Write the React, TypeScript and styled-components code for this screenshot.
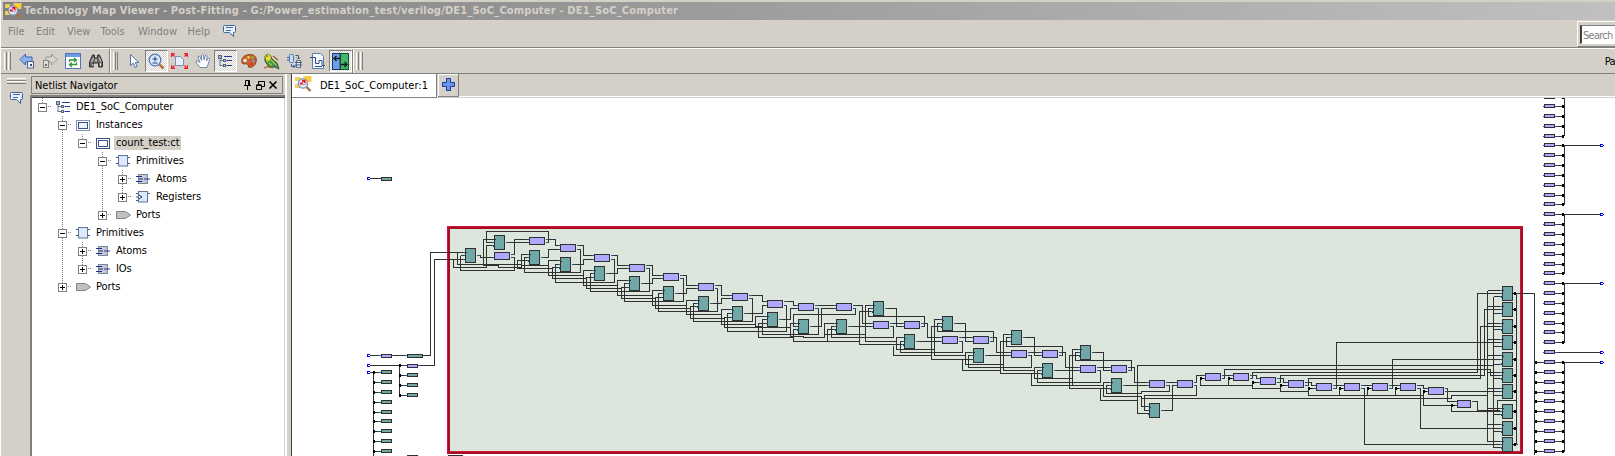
import React from "react";
import styled, { createGlobalStyle } from "styled-components";

const face = "#d4d0c8";
const ui = `"DejaVu Sans Condensed", "Noto Sans", sans-serif`;

const Global = createGlobalStyle`
  * { box-sizing: border-box; }
  html, body { margin: 0; padding: 0; overflow: hidden; background: ${face}; }
  svg { display: block; flex: none; }
`;

const Window = styled.div`
  width: 1615px;
  height: 456px;
  display: flex;
  flex-direction: column;
  overflow: hidden;
  background: ${face};
  border-left: 1px solid #fff;
  font-family: ${ui};
  font-size: 11px;
  color: #000;
  white-space: nowrap;
`;
const TitleBar = styled.header`
  flex: none;
  height: 18px;
  margin: 2px 0 0 2px;
  padding-left: 2px;
  display: flex;
  align-items: center;
  gap: 2px;
  background: linear-gradient(90deg, #808080, #c0c0c0);
`;
const Title = styled.h1`
  margin: 0;
  font-size: 11px;
  line-height: 18px;
  font-weight: bold;
  color: ${face};
  letter-spacing: 0.19px;
`;
const MenuBar = styled.nav`
  flex: none;
  height: 28px;
  display: flex;
  border-bottom: 1px solid #808080;
`;
const MenuItem = styled.span<{ $w: number }>`
  width: ${(p) => p.$w}px;
  line-height: 23px;
  color: #808080;
`;
const Menus = styled.div`
  flex: 1;
  display: flex;
  padding-left: 7px;
`;
const MenuIcon = styled.span`
  padding-top: 4px;
`;
const SearchFrame = styled.div`
  width: 38px;
  height: 26px;
  margin-top: 1px;
  padding: 3px 0 2px 2px;
  border: 1px solid #fff;
  border-right: 0;
  border-bottom-color: #808080;
`;
const SearchBox = styled.div`
  height: 19px;
  border: 1px solid #808080;
  border-left: 2px solid #404040;
  border-right: 0;
  border-bottom-color: #fff;
  background: #fff;
  color: #808080;
  line-height: 19px;
  padding-left: 1px;
  letter-spacing: -0.75px;
`;
const ToolBar = styled.div`
  flex: none;
  height: 26px;
  display: flex;
  border-top: 1px solid #fff;
  border-bottom: 1px solid #808080;
`;
const ToolGroup = styled.div<{ $w?: number }>`
  ${(p) => (p.$w ? `width: ${p.$w}px;` : "flex: 1;")}
  height: 24px;
  display: flex;
  align-items: center;
  padding-left: 3px;
  & + & { border-left: 1px solid #808080; box-shadow: inset 1px 0 #fff; }
`;
const Grip = styled.i`
  width: 7px;
  height: 18px;
  margin-right: 4px;
  border: solid #808080;
  border-width: 0 1px 0 0;
  background: linear-gradient(90deg, #fff 0 1px, ${face} 1px 2px, #808080 2px 3px, ${face} 3px 4px, #fff 4px 5px, ${face} 5px 7px);
`;
const Tool = styled.span<{ $on?: boolean }>`
  flex: none;
  width: 23px;
  height: 22px;
  display: flex;
  align-items: center;
  justify-content: center;
  ${(p) =>
    p.$on &&
    `border: 1px solid; border-color: #808080 #fff #fff #808080;
     background: repeating-conic-gradient(#fff 0 25%, ${face} 0 50%) 0 0 / 2px 2px;`}
`;
const PageLabel = styled.span`
  margin-left: auto;
  letter-spacing: -0.6px;
`;
const Body = styled.div`
  flex: 1;
  min-height: 0;
  display: flex;
`;
const SideStrip = styled.aside`
  width: 29px;
  padding: 4px 4px 0 6px;
`;
const SideGrip = styled.i`
  display: block;
  height: 6px;
  margin-bottom: 7px;
  border: solid #808080;
  border-width: 0 0 1px;
  background: linear-gradient(#fff 0 1px, ${face} 1px 2px, #808080 2px 3px, #fff 3px 4px, ${face} 4px);
`;
const SideIcon = styled.span`
  display: block;
  margin-left: 2px;
`;
const Dock = styled.section`
  width: 257px;
  display: flex;
  flex-direction: column;
  padding-top: 2px;
  border-right: 2px solid #fff;
`;
const DockHeader = styled.div`
  height: 18px;
  margin: 0 2px 0 1px;
  border: 1px solid #808080;
  padding: 1px 4px 0 3px;
  display: flex;
  align-items: center;
  justify-content: space-between;
  letter-spacing: -0.05px;
`;
const Tree = styled.div`
  flex: 1;
  margin-top: 1px;
  padding: 1px 0 0 6px;
  border: solid #808080;
  border-width: 2px 0 0 2px;
  box-shadow: inset 0 1px #404040, inset -1px 0 ${face};
  background: #fff;
`;
const Row = styled.div`
  height: 18px;
  display: flex;
  align-items: center;
`;
const Guide = styled.span<{ $line?: boolean }>`
  width: 20px;
  height: 18px;
  background: ${(p) =>
    p.$line ? "repeating-linear-gradient(#808080 0 1px, transparent 1px 2px) 4px 0 / 1px 100% no-repeat" : "none"};
`;
const Toggle = styled.span<{ $next: boolean }>`
  width: 18px;
  height: 18px;
  display: flex;
  align-items: center;
  background:
    repeating-linear-gradient(90deg, #808080 0 1px, transparent 1px 2px) 10px 8px / 4px 1px no-repeat,
    repeating-linear-gradient(#808080 0 1px, transparent 1px 2px) 4px 0 / 1px ${(p) => (p.$next ? 18 : 5)}px no-repeat;
`;
const IconSlot = styled.span`
  width: 14px;
`;
const Label = styled.span<{ $sel?: boolean }>`
  height: 14px;
  line-height: 14px;
  margin-left: 4px;
  padding: 0 2px;
  letter-spacing: -0.08px;
  background: ${(p) => (p.$sel ? face : "none")};
`;
const Main = styled.main`
  flex: 1;
  min-width: 0;
  margin-left: 4px;
  border-left: 1px solid #404040;
  display: flex;
  flex-direction: column;
`;
const Tabs = styled.div`
  flex: none;
  height: 24px;
  display: flex;
  box-shadow: inset 0 -1px ${face}, inset 0 -2px #fff;
`;
const Tab = styled.div`
  width: 145px;
  display: flex;
  align-items: center;
  gap: 8px;
  padding: 0 0 0 3px;
  background: #fff;
  border: solid #808080;
  border-width: 0 1px 1px 0;
  & svg { margin-bottom: 3px; }
`;
const NewTab = styled.div`
  width: 21px;
  height: 23px;
  margin-left: 1px;
  display: flex;
  justify-content: center;
  padding-top: 4px;
  border: solid #808080;
  border-width: 0 1px 1px 0;
  box-shadow: inset 1px 1px #fff;
`;
const Canvas = styled.div`
  flex: 1;
  min-height: 0;
  background: #fff;
  overflow: hidden;
`;

/* ---------- icons ---------- */
const Ic = ({ w = 16, h = 16, children }: { w?: number; h?: number; children: React.ReactNode }) => (
  <svg width={w} height={h} viewBox={`0 0 ${w} ${h}`} fill="none">{children}</svg>
);
const AppIcon = () => (
  <Ic w={17} h={16}>
    <path d="M3 3h8M3 8h4" stroke="#8c98b0" />
    <rect x="0.5" y="1.5" width="4" height="3" fill="#ffd83a" stroke="#e8c870" />
    <rect x="0.5" y="8.5" width="4" height="3" fill="#ffd83a" stroke="#e8c870" />
    <rect x="9" y="0.5" width="7" height="5" fill="#ffcf20" stroke="#f0c860" />
    <path d="M11.500 11l4 4" stroke="#a8703c" strokeWidth="2.400" />
    <circle cx="8" cy="7.500" r="4.600" fill="#dcebf8" stroke="#8294b0" strokeWidth="1.400" />
    <path d="M5 8.500V6.500h2V4h3.500v4.500z" fill="#e0102c" />
    <path d="M8 5.500v2h2" stroke="#fff" />
  </Ic>
);
const Chat = () => (
  <Ic w={15} h={14}>
    <path d="M2.5 1.5h10q1 0 1 1v5q0 1-1 1h-1v4l-4-4H2.500q-1 0-1-1v-5q0-1 1-1z" fill="#e8f0fc" stroke="#3c64a0" />
    <path d="M4 3.500h7M4 6.500h5" stroke="#4a6a9c" />
  </Ic>
);
const Back = () => (
  <Ic>
    <path d="M1 6.500L6.500 1v3H13v5H6.500v3z" fill="#8cb4ec" stroke="#3c64b0" />
    <rect x="8.500" y="8.500" width="6" height="6.500" fill="#eef2fa" stroke="#4c6488" />
    <path d="M11 11h2v2h-2z" fill="#304870" />
  </Ic>
);
const Forward = () => (
  <Ic>
    <path d="M15 6.500L9.500 1v3H4v5h5.500v3z" fill="#d8d6d0" stroke="#989690" />
    <rect x="1.500" y="7.500" width="5" height="7" fill="#dedcd8" stroke="#888680" />
    <path d="M3 11h2v2h-2z" fill="#706e68" />
  </Ic>
);
const Refresh = () => (
  <Ic>
    <rect x="0.500" y="0.500" width="15" height="15" fill="#fff" stroke="#5078b8" />
    <path d="M1 1h14v3H1z" fill="#6c9ce0" />
    <path d="M4.500 9V7H11M9 5l2.500 2L9 9M11.500 9.500v2H5M7 9.500l-2.500 2L7 14" stroke="#2c9444" strokeWidth="1.300" />
  </Ic>
);
const Binoculars = () => (
  <Ic>
    <path d="M4.500 2h2v3h3V2h2l3 7v5h-4v-4h-5v4h-4V9z" fill="#686868" stroke="#303030" />
    <path d="M3.500 9l2-4M5 11v2M11 4.500l2 4M12.500 10v3" stroke="#e0e0e0" />
    <path d="M7 6h2v3H7z" fill="#a8a8a8" />
  </Ic>
);
const Pointer = () => (
  <Ic>
    <path d="M4.500 1.500v11l2.800-2.300 1.900 4.300 2-1-2-4h3.600z" fill="#fff" stroke="#5070a8" />
  </Ic>
);
const ZoomTool = () => (
  <Ic w={17} h={17}>
    <path d="M11.500 11.500l4 4" stroke="#b8783c" strokeWidth="2.500" />
    <circle cx="7" cy="7" r="5.800" fill="#dceafc" stroke="#5078b8" strokeWidth="1.300" />
    <path d="M4.500 6h5M7 3.500v5M4.500 10h5" stroke="#203c80" />
  </Ic>
);
const Fit = () => (
  <Ic w={17} h={16}>
    <path d="M4.500 3.500h5l3 3v6h-8z" fill="#e8f0fc" stroke="#7890b8" />
    <path d="M.5 4V.5H4M.5.5l3 3M13 .5h3.500V4M16.500.5l-3 3M.5 12v3.500H4M.5 15.500l3-3M13 15.500h3.500V12M16.500 15.500l-3-3" stroke="#f02030" strokeWidth="1.300" />
  </Ic>
);
const Hand = () => (
  <Ic>
    <path d="M5 14.500L1 9q0-2 2-1l2 1.500L3 4q.3-1.700 2-.5l1.500 4L6.500 2q1-1.500 2 0l.5 5 1.300-4.500q1.200-1 1.900.3L11.500 8l1.700-2.500q1.500-.5 1.500 1L12 14.500z" fill="#fff" stroke="#7088b0" />
  </Ic>
);
const Hier = () => (
  <Ic w={15} h={13}>
    <path d="M2 1v10M2 5.500h3M2 10.500h3" stroke="#607890" />
    <path d="M6 1.500h8M8.500 5.500H14M8.500 10.500H14" stroke="#2438a0" strokeWidth="1.200" />
    <rect x="0.500" y="0.500" width="3" height="3" fill="#a8b8d0" stroke="#506888" />
    <rect x="5.500" y="4.500" width="2" height="2" fill="#f0d060" stroke="#506888" />
    <rect x="5.500" y="9.500" width="2" height="2" fill="#f0d060" stroke="#506888" />
  </Ic>
);
const Palette = () => (
  <Ic>
    <path d="M.7 8Q1 2 9 1.500q6.300.2 6.300 5.500 0 6-6 7.500-2.500.3-2-2.500Q6 10 3 11 .7 11 .7 8z" fill="#c8622c" stroke="#8c4420" />
    <circle cx="4" cy="7.500" r="1.800" fill="#e8e8f8" /><circle cx="7.500" cy="4.300" r="1.400" fill="#ffd040" />
    <circle cx="11.500" cy="4.500" r="1.300" fill="#78c848" /><circle cx="12.500" cy="8" r="1.300" fill="#68a0e8" /><circle cx="10.300" cy="11" r="1.400" fill="#e83030" />
  </Ic>
);
const Bird = () => (
  <Ic w={17} h={17}>
    <path d="M2 3q2-3 5-1l2 4 5 4 2 6-4-2-6 0-4-6z" fill="#48a040" stroke="#286028" />
    <path d="M2 3q2-3 5-1l1 4-4 3z" fill="#f8d838" />
    <path d="M8 7l5 5M6 10l4 3" stroke="#e8d040" />
    <path d="M9 12l5 3" stroke="#3858a0" />
    <path d="M1 15l4-1.500 5 1.500M10 3l5 4" stroke="#a05828" strokeWidth="1.300" />
    <circle cx="4" cy="3" r=".8" fill="#202020" />
  </Ic>
);
const Swap = () => (
  <Ic>
    <rect x="2.500" y="1.500" width="4" height="8" rx="1" fill="#c8dcf8" stroke="#5078b8" />
    <rect x="9.500" y="7.500" width="4" height="7" fill="#e0e8f4" stroke="#607898" />
    <path d="M8.500 2.500h3V6M10 4.500l1.500 1.500L13 4.500M4.500 11v2.500H8M6.500 12l1.500 1.500L6.500 15M0 4.500h2M0 7h2M8 9.500h7M8 12h7" stroke="#405888" />
  </Ic>
);
const Wave = () => (
  <Ic>
    <path d="M2.500.5h8l3 3v12h-11z" fill="#f4f8ff" stroke="#5c7cac" />
    <path d="M0 4.500h5.500v6H9v-3h3v5h3M5 13.500h7" stroke="#304c80" />
  </Ic>
);
const Panes = () => (
  <Ic w={17} h={17}>
    <rect x="0.500" y="0.500" width="7.500" height="16" fill="#6ca0e8" stroke="#183868" />
    <rect x="8.500" y="0.500" width="8" height="16" fill="#40b868" stroke="#185030" />
    <path d="M2 5.500h6M4.500 3L2 5.500 4.500 8M9 11.500h6M12.500 9l2.500 2.500-2.500 2.500" stroke="#101820" strokeWidth="1.300" />
  </Ic>
);
const DockButtons = () => (
  <svg width="34" height="11" viewBox="0 0 34 11" fill="none" stroke="#000">
    <path d="M1.500 5V.5h4V5M4.500 1v4M0 5.500h7M3.500 6v4" />
    <path d="M14.500 4V1.500h6v5H18M14.500 1.500h6M12.500 5.500h5v4h-5zM12.500 4.700h5" />
    <path d="M25.500 1.500l7 7M32.500 1.500l-7 7" strokeWidth="1.600" />
  </svg>
);
const Plus = () => (
  <Ic w={13} h={13}>
    <path d="M4.500.5h4v4h4v4h-4v4h-4v-4h-4v-4h4z" fill="#6c94e8" stroke="#183c98" />
  </Ic>
);
const Expander = ({ open }: { open: boolean }) => (
  <svg width="9" height="9" viewBox="0 0 9 9" fill="none">
    <rect x=".5" y=".5" width="8" height="8" fill="#fff" stroke="#808080" />
    <path d={open ? "M2 4.500h5" : "M2 4.500h5M4.500 2v5"} stroke="#000" />
  </svg>
);
const Instance = ({ dim }: { dim?: boolean }) => (
  <Ic w={14} h={11}>
    <rect x=".5" y=".5" width="13" height="10" fill="#fff" stroke={dim ? "#8494ac" : "#385078"} />
    <rect x="2.500" y="2.500" width="9" height="6" fill={dim ? "#e8f0f8" : "#fff"} stroke="#385090" />
  </Ic>
);
const Chip = () => (
  <Ic w={14} h={12}>
    <path d="M0 2.500h14M0 8.500h14" stroke="#405878" />
    <rect x="2.500" y=".5" width="9" height="10.500" fill="#dce8ff" stroke="#607898" />
  </Ic>
);
const Atom = () => (
  <Ic w={14} h={10}>
    <rect x="2.500" y=".5" width="9" height="9" fill="#c4c8d0" stroke="#78889c" />
    <path d="M0 2.500h6M0 7.500h6M3 5h4M8 5h6" stroke="#1c2c88" />
  </Ic>
);
const Register = () => (
  <Ic w={14} h={12}>
    <path d="M0 2.500h3M0 6h3M0 9.500h3M11 2.500h3" stroke="#405878" />
    <rect x="2.500" y=".5" width="9" height="10.500" fill="#dce8ff" stroke="#607898" />
    <path d="M3 4l3 2-3 2" stroke="#203870" />
  </Ic>
);
const Port = () => (
  <Ic w={15} h={8}>
    <path d="M.5.5h9l5 3.500-5 3.500h-9z" fill="#c0c0c0" stroke="#7c8490" />
  </Ic>
);

/* ---------- netlist tree ---------- */
type Node = { text: string; icon: React.ReactNode; guides: number[]; level: number; open?: boolean; next?: boolean; sel?: boolean };
const nodes: Node[] = [
  { text: "DE1_SoC_Computer", icon: <Hier />, guides: [], level: 0, open: true },
  { text: "Instances", icon: <Instance dim />, guides: [], level: 1, open: true, next: true },
  { text: "count_test:ct", icon: <Instance />, guides: [1], level: 2, open: true, sel: true },
  { text: "Primitives", icon: <Chip />, guides: [1], level: 3, open: true, next: true },
  { text: "Atoms", icon: <Atom />, guides: [1, 3], level: 4, next: true },
  { text: "Registers", icon: <Register />, guides: [1, 3], level: 4 },
  { text: "Ports", icon: <Port />, guides: [1], level: 3 },
  { text: "Primitives", icon: <Chip />, guides: [], level: 1, open: true, next: true },
  { text: "Atoms", icon: <Atom />, guides: [1], level: 2, next: true },
  { text: "IOs", icon: <Atom />, guides: [1], level: 2 },
  { text: "Ports", icon: <Port />, guides: [], level: 1 },
];

/* ---------- schematic ----------
   The sheet is split into tiles; coordinates inside a tile are in thirds of a
   pixel. A wire is "x y x y x ...", alternating horizontal and vertical runs. */
type Tile = { ox: number; oy: number; lut: string; reg: string; wires: string };
const tiles: Tile[] = [
  {
    ox: 440, oy: 220,
    reg: "75 84,162 45,267 90,360 111,462 138,567 168,669 198,774 228",
    lut: "162 96,267 51,360 72,462 102,567 132,669 159,774 189",
    wires: `-30 97 75;-18 118 75;52 97 52 133 244;75 106 61 106;61 106 61 151 223 112 210;
      40 118 40 142 139 76 162;108 106 121 112 162;168 58 130 136 175 142 244 103 267;162 67 139 34 325 67 315;
      195 67 267;210 103 223 58 267;315 58 346 76 360;267 121 232 145 337;267 112 253 157 421 88 408;300 112 325 88 360;
      244 136 325;360 121 325 166 430;360 133 346 187 523 118 510;360 142 337 175 439;393 133 430 118 462;
      408 76 430 106 462;462 151 430 196 532;462 160 451 214 628 145 615;462 172 439 205 544;495 160 532 145 567;510 106 532 136 567;
      567 181 532 226 637;567 190 553 244 730 175 717;567 202 544 235 646;600 190 637 175 669;615 136 637 166 669;
      669 211 637 256 739;669 220 655 274 832 205 822;669 232 646 265 751;702 220 739 205 774;717 166 739 196 774;
      774 241 739 283 844;774 250 760 304 937;774 259 751 295 853;807 250 844 235 876;822 196 844 226 876`,
  },
  {
    ox: 700, oy: 270,
    reg: "96 108,201 126,294 147,408 147,519 93,612 192",
    lut: "96 69,201 90,294 99,408 99,519 153,612 153",
    wires: `96 118 64 163 166;96 130 82 184 259 106 249;96 142 73 172 271;157 154 157 85 144;129 130 187 106 201;144 76 187 94 201;
      201 139 166 169 187;201 148 187 193 355 115 342;201 160 175 202 280;234 148 271 115 294;249 94 280 106 294;
      342 106 408;294 160 271 199 310 202 373 160 408;294 169 280 133 466 115 457;294 178 280 214 478;327 169 364 115 408;
      457 106 487 160 519;441 169 519;373 193 496;408 169 394 202 580 169 567;408 178 382 214;382 178 382 214 400;
      519 106 496 214 589;519 115 505 139 673 169 660;519 124 478 223 612;552 115 589 169 612;567 160 612;660 160 682 202 726;
      612 202 589 238 703;612 214 601 247 787 214 775;580 226 580 256 694;645 214 726`,
  },
  {
    ox: 920, oy: 290,
    reg: "66 78,159 174,273 120,366 219,480 165,573 264,687 339",
    lut: "66 138,159 138,273 180,366 180,480 225,573 225,687 270,771 270",
    wires: `66 88 43 196 136;66 100 52 124 220 154 207;66 109 34 208 159;99 100 136 154 159;115 142 159;
      127 208 127 241 241;159 187 136 223 250;159 196 145 232 334 196 322;192 196 273;207 142 229 187 273;
      273 133 250 241 343;273 142 259 169 427 196 414;273 154 241 250 367;306 142 343 196 366;322 187 366;414 187 436 232 480;
      366 232 343 265 457;366 241 352 277 541 241 528;334 250 334 286 457;399 241 480;
      480 178 457 286 550;480 187 466 211 634 241 621;480 196 448 295 573;513 187 550 241 573;528 232 573;621 232 643 277 687;
      573 277 550 319 664 349 687;573 286 559 310 664 304 748 286 735;541 295 541 331 652;606 286 687;
      690 226 652 370 687;735 277 771;819 277 829 256 855;819 286 829 316 673 361 687;664 325 700;720 361 757 286 771;664 319 664 325 700;841 265 841 286 997`,
  },
  {
    ox: 1150, oy: 340,
    reg: "",
    lut: "165 99,249 99,330 111,414 120,498 129,582 129,666 129,750 129,834 141",
    wires: `0 76 1030;-26 175 904 166 1012;213 106 249;213 115 223 88 1021 106 1056;165 115 151 136 307;235 115 235 136 240;249 115 235;
      297 106 319 115 330;297 115 307 97 982;330 127 307 145 391;378 115 400 127 414;378 127 391 106 1003;
      462 127 484 136 498;462 136 475 115 991;414 136 391 154 475;498 145 475 166 820;582 145 568 166;568 145 568 166 580;666 145 652 166;652 145 652 166 660;750 145 736;736 145 736 166 740;
      546 136 582;630 136 666;714 136 750;546 145 559 7 1056;630 145 643 313 1056;714 145 727 58 1056;798 136 820 145 834;798 145 811 265 1056;
      834 154 820 196 921`,
  },
  {
    ox: 1400, oy: 270,
    reg: "306 48,306 96,306 147,306 195,306 246,306 294,306 342,306 402,306 453,306 501",
    lut: "",
    wires: `232 307 232 70 306;253 316 253 118 306;241 325 241 169 306;262 61 262 514 306;280 79 280 532 306;
      262 61 306;262 109 306;262 160 306;262 208 306;262 256 306;262 307 306;262 355 306;262 415 306;262 463 306;
      280 79 306;280 130 306;280 178 306;280 229 306;280 283 306;280 325 306;280 376 306;280 433 306;280 484 306;
      132 355 142 394 171;132 364 306;171 406 154 424 306;213 394 232 421 297;297 424 293 391 348;349 70 349 523 342;342 70 403;403 70 403 552`,
  },
];
const px = (v: number) => Math.floor(v / 3);
const pts = (s: string) => s.split(",").filter(Boolean).map((p) => p.trim().split(" ").map(Number));

type Box = { x: number; y: number; w: number; h: number; kind: "reg" | "lut" };
const boxes: Box[] = [{ x: 1457, y: 400, w: 14, h: 8, kind: "lut" }];
const wires: string[] = [];
const ends: [number, number, number][] = [];
for (const t of tiles) {
  for (const [x, y] of pts(t.reg)) boxes.push({ x: t.ox + px(x), y: t.oy + px(y), w: 11, h: 15, kind: "reg" });
  for (const [x, y] of pts(t.lut)) boxes.push({ x: t.ox + px(x), y: t.oy + px(y), w: 16, h: 8, kind: "lut" });
  for (const w of t.wires.split(";")) {
    const n = w.trim().split(/\s+/).map(Number);
    const c = n.map((v, i) => (i % 2 ? t.oy : t.ox) + px(v) + 0.5);
    let d = `M${c[0]} ${c[1]}`;
    for (let i = 2; i < c.length; i++) d += (i % 2 ? "V" : "H") + c[i];
    wires.push(d);
    if (n[2] !== n[0]) ends.push([c[0], c[1], Math.sign(c[2] - c[0])]);
    if (n.length % 2 && n.length > 2) {
      const prev = c[c.length - 3];
      ends.push([c[c.length - 1], c[c.length - 2], Math.sign(prev - c[c.length - 1])]);
    }
  }
}
const pins = ends.filter(([x, y]) =>
  boxes.some((b) => y > b.y && y < b.y + b.h && (Math.abs(x - b.x) < 1.6 || Math.abs(x - b.x - b.w) < 1.6))
);

const rightLuts = [95, ...[312, 342, 372, 402, 431, 461, 489, 519, 549, 579, 608, 638, 668, 696, 726, 756, 786].map(px),
  ...[5, 35, 63, 93, 123, 153, 182, 212, 240, 270, 300, 330, 360, 389, 419, 447, 477, 507, 537].map((v) => 270 + px(v))];
const leftRegs = [91, 121, 151, 181, 211, 238, 268, 298, 328].map((v) => 340 + px(v));
const midRegs = [100, 130, 160].map((v) => 340 + px(v));
const outDots = [70, 118, 169, 217, 268, 316, 364, 424, 475, 523].map((v) => 270 + px(v));
const gateDots: [number, number][] = [[151, 115], [235, 115], [307, 127], [391, 136], [475, 145], [568, 145], [652, 145], [736, 145], [820, 154], [904, 196]].map(
  ([x, y]) => [1150 + px(x), 340 + px(y)]
);
gateDots.push([1200, 378]);

const ink = "#303030";
const lav = "#b0a8ff";
const teal = "#70a8a8";

const Small = ({ x, y, w = 11, fill }: { x: number; y: number; w?: number; fill: string }) => (
  <rect x={x + 0.5} y={y + 0.5} width={w - 1} height={3} fill={fill} stroke={ink} />
);
const Terminal = ({ x, y, out }: { x: number; y: number; out?: boolean }) => (
  <g fill="#0000e8">
    <rect x={x} y={y - 1} width="3" height="1" />
    <rect x={x} y={y + 1} width="3" height="1" />
    <rect x={x} y={y} width="1" height="1" />
    {out && <rect x={x + 3} y={y} width="1" height="1" />}
  </g>
);

const Schematic = () => (
  <svg width="1323" height="358" viewBox="292 98 1323 358" shapeRendering="crispEdges" fill="none">
    <rect x="448" y="227" width="1073" height="226" fill="#dce6dc" />
    <path d="M448.500 454V227.500H1523M448 452.500H1521.500V227" stroke="#a80c24" strokeWidth="3" />
    <path d="M447.500 453V226.500H1522M449 451.500H1520.500V228" stroke="#d0143a" />
    <path d={wires.join("")} stroke={ink} />
    <path d={pins.map(([x, y, s]) => `M${x} ${y}h${s * 3}`).join("")} stroke="#24587c" />
    {boxes.map((b, i) => (
      <g key={i}>
        <rect x={b.x + 0.5} y={b.y + 0.5} width={b.w - 1} height={b.h - 1} fill={b.kind === "reg" ? teal : lav} stroke={ink} />
        {b.kind === "reg" && (
          <>
            <rect x={b.x + 1} y={b.y + 4} width="1" height="1" fill={ink} />
            <rect x={b.x - 1} y={b.y + 11} width="1" height="1" fill="#00508c" />
          </>
        )}
      </g>
    ))}
    {outDots.map((y) => (
      <g key={y} fill="#000"><rect x="1512" y={y} width="3" height="1" /><rect x="1514" y={y - 1} width="2" height="3" /></g>
    ))}
    {gateDots.map(([x, y]) => (
      <g key={`${x}-${y}`} fill="#000"><rect x={x} y={y - 1} width="2" height="3" /><rect x={x + 2} y={y} width="2" height="1" /></g>
    ))}

    {/* output buffers down the right edge */}
    {rightLuts.map((y) => {
      const single = y === 350;
      const from = y >= 360;
      return (
        <g key={y}>
          <path d={`M${from ? 1535 : 1543} ${y + 2.5}H${single ? 1600 : 1564}`} stroke={ink} />
          <path d={`M1543 ${y + 2.5}h2M1555 ${y + 2.5}h3`} stroke="#24587c" />
          <Small x={1544} y={y} fill={lav} />
          {!single && <rect x="1562" y={y + 1} width="2" height="3" fill="#000" />}
          {from && <rect x="1535" y={y + 1} width="2" height="3" fill="#000" />}
        </g>
      );
    })}
    <path d="M1564.500 98V136M1600 145.500H1564.500V205M1600 214.500H1564.500V274M1600 283.500H1564.500V343M1600 362.500H1564.500V452" stroke={ink} />
    {[145, 214, 283, 352, 362].map((y) => <Terminal key={y} x={1600} y={y} out />)}

    {/* inputs on the left */}
    <path d="M370 178.500H382M370 355.500H430.500V252.500H440M370 365.500H434.500V259.500H440M370 372.500H374M373.500 372V456M399.500 365V395" stroke={ink} />
    <path d="M380 178.500h2M378 355.500h3M391 355.500h3M404 355.500h3M404 365.500h3M418 365.500h3" stroke="#24587c" />
    <Terminal x={367} y={178} />
    <Terminal x={367} y={355} />
    <Terminal x={367} y={365} />
    <Terminal x={367} y={372} />
    <Small x={381} y={177} fill={teal} />
    <Small x={381} y={354} fill={lav} />
    <Small x={407} y={354} w={16} fill={teal} />
    <Small x={407} y={364} fill={lav} />
    {leftRegs.map((y) => (
      <g key={y}>
        <path d={`M374 ${y + 2.5}h7`} stroke={ink} /><path d={`M378 ${y + 2.5}h3`} stroke="#24587c" />
        <rect x="373" y={y + 1} width="2" height="3" fill="#000" />
        <Small x={381} y={y} fill={teal} />
      </g>
    ))}
    <rect x="399" y="364" width="2" height="3" fill="#000" />
    {midRegs.map((y) => (
      <g key={y}>
        <path d={`M400 ${y + 2.5}h7`} stroke={ink} /><path d={`M404 ${y + 2.5}h3`} stroke="#24587c" />
        <rect x="399" y={y + 1} width="2" height="3" fill="#000" />
        <Small x={407} y={y} fill={teal} />
      </g>
    ))}
    <path d="M407 455.500h11M448 455.500h15" stroke={ink} />
  </svg>
);

const menus: [string, number][] = [["File", 28], ["Edit", 31], ["View", 33.5], ["Tools", 37.5], ["Window", 49.5], ["Help", 34.5]];

export default function App() {
  return (
    <Window>
      <Global />
      <TitleBar>
        <AppIcon />
        <Title>Technology Map Viewer - Post-Fitting - G:/Power_estimation_test/verilog/DE1_SoC_Computer - DE1_SoC_Computer</Title>
      </TitleBar>
      <MenuBar>
        <Menus>
          {menus.map(([m, w]) => <MenuItem key={m} $w={w}>{m}</MenuItem>)}
          <MenuIcon><Chat /></MenuIcon>
        </Menus>
        <SearchFrame><SearchBox>Search</SearchBox></SearchFrame>
      </MenuBar>
      <ToolBar>
        <ToolGroup $w={108}>
          <Grip />
          <Tool><Back /></Tool><Tool><Forward /></Tool><Tool><Refresh /></Tool><Tool><Binoculars /></Tool>
        </ToolGroup>
        <ToolGroup $w={243}>
          <Grip />
          <Tool><Pointer /></Tool><Tool $on><ZoomTool /></Tool><Tool><Fit /></Tool><Tool><Hand /></Tool><Tool $on><Hier /></Tool>
          <Tool><Palette /></Tool><Tool><Bird /></Tool><Tool><Swap /></Tool><Tool><Wave /></Tool><Tool $on><Panes /></Tool>
        </ToolGroup>
        <ToolGroup>
          <Grip />
          <PageLabel>Pa</PageLabel>
        </ToolGroup>
      </ToolBar>
      <Body>
        <SideStrip>
          <SideGrip />
          <SideIcon><Chat /></SideIcon>
        </SideStrip>
        <Dock>
          <DockHeader>Netlist Navigator<DockButtons /></DockHeader>
          <Tree>
            {nodes.map((n, i) => (
              <Row key={i}>
                {Array.from({ length: n.level }, (_, l) => <Guide key={l} $line={n.guides.includes(l)} />)}
                <Toggle $next={!!n.next}><Expander open={!!n.open} /></Toggle>
                <IconSlot>{n.icon}</IconSlot>
                <Label $sel={n.sel}>{n.text}</Label>
              </Row>
            ))}
          </Tree>
        </Dock>
        <Main>
          <Tabs>
            <Tab><AppIcon />DE1_SoC_Computer:1</Tab>
            <NewTab><Plus /></NewTab>
          </Tabs>
          <Canvas><Schematic /></Canvas>
        </Main>
      </Body>
    </Window>
  );
}
